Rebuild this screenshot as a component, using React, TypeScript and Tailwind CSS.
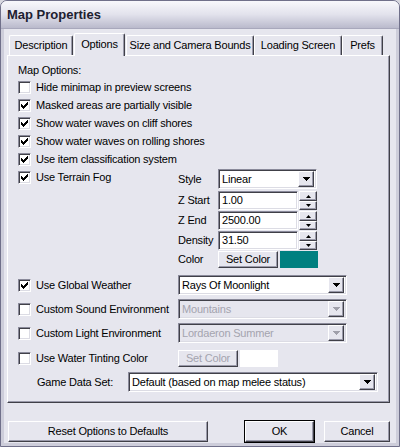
import React from 'react';

const raised =
  'border border-t-white border-l-white border-b-[#404048] border-r-[#404048] shadow-[inset_-1px_-1px_0_#9a9aaa]';
const sunken =
  'border border-t-[#8a8a9a] border-l-[#8a8a9a] border-b-white border-r-white shadow-[inset_1px_1px_0_#404048,inset_-1px_-1px_0_#dcdce4]';

const Check: React.FC<{ checked?: boolean }> = ({ checked }) => (
  <span className={`w-[13px] h-[13px] shrink-0 bg-white flex items-center justify-center ${sunken}`}>
    {checked && (
      <svg width="7" height="7" viewBox="0 0 7 7" shapeRendering="crispEdges">
        {[2, 3, 4, 3, 2, 1, 0].map((top, i) => (
          <rect key={i} x={i} y={top} width="1" height="3" fill="#000" />
        ))}
      </svg>
    )}
  </span>
);

const DownArrow: React.FC<{ disabled?: boolean }> = ({ disabled }) => (
  <svg width="7" height="4" viewBox="0 0 7 4" shapeRendering="crispEdges">
    <polygon points="0,0 7,0 3.5,4" fill={disabled ? '#a0a0aa' : '#000'} />
  </svg>
);

const Combo: React.FC<{ value: string; width: string; disabled?: boolean }> = ({ value, width, disabled }) => (
  <div
    className={`${width} h-[20px] flex items-center pl-[3px] pr-[2px] ${sunken} ${
      disabled ? 'bg-[#e6e6ee] text-[#a4a4ae]' : 'bg-white text-black'
    }`}
  >
    <span className="flex-1 truncate">{value}</span>
    <span className={`w-[16px] h-[16px] bg-[#e6e6ee] flex items-center justify-center ${raised}`}>
      <DownArrow disabled={disabled} />
    </span>
  </div>
);

const SpinField: React.FC<{ value: string }> = ({ value }) => (
  <div className="flex items-center h-[19px]">
    <div className={`w-[80px] h-[19px] bg-white flex items-center pl-[3px] ${sunken}`}>{value}</div>
    <div className="ml-[1px] w-[18px] h-[19px] flex flex-col">
      <span className={`h-[10px] bg-[#e6e6ee] flex items-center justify-center ${raised}`}>
        <svg width="5" height="3" viewBox="0 0 5 3"><polygon points="2.5,0 5,3 0,3" fill="#000" /></svg>
      </span>
      <span className={`h-[9px] bg-[#e6e6ee] flex items-center justify-center ${raised}`}>
        <svg width="5" height="3" viewBox="0 0 5 3"><polygon points="0,0 5,0 2.5,3" fill="#000" /></svg>
      </span>
    </div>
  </div>
);

const Button: React.FC<{ label: string; width: string; height?: string; disabled?: boolean; isDefault?: boolean }> = ({
  label,
  width,
  height = 'h-[21px]',
  disabled,
  isDefault,
}) => (
  <div className={`${width} ${height} ${isDefault ? 'outline outline-1 outline-black' : ''}`}>
    <div
      className={`w-full h-full bg-[#e6e6ee] flex items-center justify-center ${raised} ${
        disabled ? 'text-[#a4a4ae]' : 'text-black'
      }`}
    >
      {label}
    </div>
  </div>
);

const tabs = [
  { label: 'Description', w: 'w-[64px]', ml: 'ml-[2px]' },
  { label: 'Options', w: 'w-[51px]', ml: 'ml-[1px]', active: true },
  { label: 'Size and Camera Bounds', w: 'w-[128px]', ml: 'ml-[1px]' },
  { label: 'Loading Screen', w: 'w-[88px]', ml: '' },
  { label: 'Prefs', w: 'w-[41px]', ml: '' },
];

const options = [
  { label: 'Hide minimap in preview screens', checked: false },
  { label: 'Masked areas are partially visible', checked: true },
  { label: 'Show water waves on cliff shores', checked: true },
  { label: 'Show water waves on rolling shores', checked: true },
  { label: 'Use item classification system', checked: true },
];

export default function App() {
  return (
    <div className="w-[400px] h-[447px] bg-[#d8d8e0] font-['Liberation_Sans',Arial,sans-serif] text-[11px] tracking-[-0.2px] leading-none text-black select-none">
      <div className="h-full flex flex-col rounded-t-[7px] border border-[#70708a] bg-[#e6e6ee] overflow-hidden">
        {/* Title bar */}
        <div className="h-[28px] shrink-0 bg-linear-to-b from-[#f8f8fc] via-[#e2e2ec] to-[#babacc] flex items-center pl-[6px] text-[13px] tracking-normal font-bold text-[#202030] border-b border-[#a8a8bc]">
          Map Properties
        </div>

        <div className="flex-1 flex flex-col pl-[3px] pr-[6px] border-x-[3px] border-b-[3px] border-[#cdcdda]">
          {/* Tabs */}
          <div className="mt-[4px] h-[22px] flex items-end">
            {tabs.map((t) => (
              <div
                key={t.label}
                className={`${t.w} ${t.ml} flex items-center justify-center bg-[#e6e6ee] rounded-t-[2px] border-t border-l border-t-white border-l-white border-r border-r-[#404048] shadow-[inset_-1px_0_0_#9a9aaa] ${
                  t.active ? 'h-[23px] -mb-[1px] relative z-10 pb-[2px]' : 'h-[20px]'
                }`}
              >
                {t.label}
              </div>
            ))}
          </div>

          {/* Panel */}
          <div className={`h-[348px] flex flex-col pl-[10px] pt-[7px] ${raised}`}>
            <div className="h-[15px] flex items-center">Map Options:</div>
            {options.map((o) => (
              <div key={o.label} className="h-[18px] flex items-center gap-[5px]">
                <Check checked={o.checked} />
                <span>{o.label}</span>
              </div>
            ))}

            {/* Terrain fog */}
            <div className="flex">
              <div className="w-[160px] h-[18px] flex items-center gap-[5px]">
                <Check checked />
                <span>Use Terrain Fog</span>
              </div>
              <div className="flex flex-col">
                <div className="mt-[1px] h-[20px] flex items-center">
                  <span className="w-[40px]">Style</span>
                  <Combo value="Linear" width="w-[99px]" />
                </div>
                <div className="mt-[2px] flex flex-col gap-[1px]">
                  {[
                    ['Z Start', '1.00'],
                    ['Z End', '2500.00'],
                    ['Density', '31.50'],
                  ].map(([l, v]) => (
                    <div key={l} className="flex items-center h-[19px]">
                      <span className="w-[40px]">{l}</span>
                      <SpinField value={v} />
                    </div>
                  ))}
                </div>
                <div className="mt-[1px] h-[17px] flex items-center">
                  <span className="w-[40px]">Color</span>
                  <Button label="Set Color" width="w-[60px]" height="h-[17px]" />
                  <span className="ml-[2px] w-[38px] h-[17px] bg-[#008080]" />
                </div>
              </div>
            </div>

            {/* Environment rows */}
            <div className="mt-[7px] h-[20px] flex items-center">
              <div className="w-[160px] flex items-center gap-[5px]">
                <Check checked />
                <span>Use Global Weather</span>
              </div>
              <Combo value="Rays Of Moonlight" width="w-[169px]" />
            </div>
            <div className="mt-[4px] h-[20px] flex items-center">
              <div className="w-[160px] flex items-center gap-[5px]">
                <Check />
                <span>Custom Sound Environment</span>
              </div>
              <Combo value="Mountains" width="w-[169px]" disabled />
            </div>
            <div className="mt-[4px] h-[20px] flex items-center">
              <div className="w-[160px] flex items-center gap-[5px]">
                <Check />
                <span>Custom Light Environment</span>
              </div>
              <Combo value="Lordaeron Summer" width="w-[169px]" disabled />
            </div>
            <div className="mt-[5px] h-[20px] flex items-center">
              <div className="w-[160px] flex items-center gap-[5px]">
                <Check />
                <span>Use Water Tinting Color</span>
              </div>
              <Button label="Set Color" width="w-[60px]" height="h-[17px]" disabled />
              <span className="ml-[2px] w-[38px] h-[17px] bg-white" />
            </div>
            <div className="mt-[4px] h-[20px] flex items-center pl-[19px]">
              <span className="w-[91px]">Game Data Set:</span>
              <Combo value="Default (based on map melee status)" width="w-[250px]" />
            </div>
          </div>

          {/* Bottom buttons */}
          <div className="mt-[18px] flex items-center">
            <Button label="Reset Options to Defaults" width="w-[200px] ml-[1px]" />
            <Button label="OK" width="w-[69px] ml-[37px]" isDefault />
            <Button label="Cancel" width="w-[66px] ml-[10px]" />
          </div>
        </div>
      </div>
    </div>
  );
}
